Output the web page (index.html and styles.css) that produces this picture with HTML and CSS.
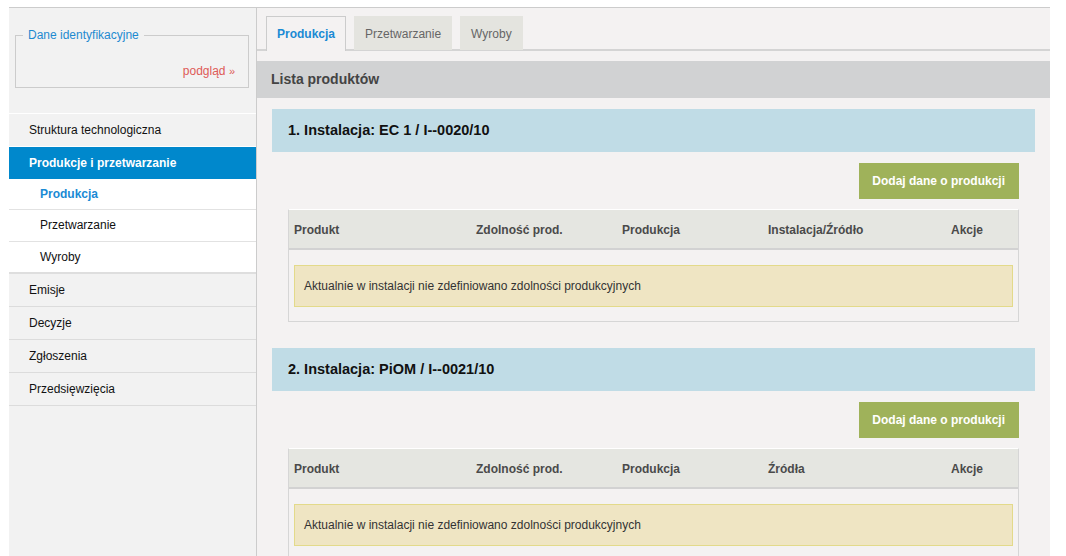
FILE: index.html
```html
<!DOCTYPE html>
<html lang="pl">
<head>
    <meta charset="UTF-8">
    <title>Lista produktów</title>
    <link rel="stylesheet" href="styles.css">
</head>
<body>
    <div class="page">
        <aside class="sidebar">
            <fieldset class="ident">
                <legend>Dane identyfikacyjne</legend>
                <a class="preview" href="#">podgląd <span class="raquo">»</span></a>
            </fieldset>
            <ul class="nav">
                <li class="nav-item">Struktura technologiczna</li>
                <li class="nav-item active">Produkcje i przetwarzanie</li>
                <li class="sub-item current">Produkcja</li>
                <li class="sub-item">Przetwarzanie</li>
                <li class="sub-item last">Wyroby</li>
                <li class="nav-item">Emisje</li>
                <li class="nav-item">Decyzje</li>
                <li class="nav-item">Zgłoszenia</li>
                <li class="nav-item">Przedsięwzięcia</li>
            </ul>
        </aside>

        <main class="content">
            <div class="tabs">
                <span class="tab active">Produkcja</span>
                <span class="tab">Przetwarzanie</span>
                <span class="tab">Wyroby</span>
            </div>

            <h2 class="list-title">Lista produktów</h2>

            <section class="installation">
                <h3 class="inst-title">1. Instalacja: EC 1 / I--0020/10</h3>
                <div class="actions">
                    <button class="btn-add">Dodaj dane o produkcji</button>
                </div>
                <div class="table">
                    <div class="table-head">
                        <span>Produkt</span>
                        <span>Zdolność prod.</span>
                        <span>Produkcja</span>
                        <span>Instalacja/Źródło</span>
                        <span>Akcje</span>
                    </div>
                    <div class="table-body">
                        <div class="notice">Aktualnie w instalacji nie zdefiniowano zdolności produkcyjnych</div>
                    </div>
                </div>
            </section>

            <section class="installation">
                <h3 class="inst-title">2. Instalacja: PiOM / I--0021/10</h3>
                <div class="actions">
                    <button class="btn-add">Dodaj dane o produkcji</button>
                </div>
                <div class="table">
                    <div class="table-head">
                        <span>Produkt</span>
                        <span>Zdolność prod.</span>
                        <span>Produkcja</span>
                        <span>Źródła</span>
                        <span>Akcje</span>
                    </div>
                    <div class="table-body">
                        <div class="notice">Aktualnie w instalacji nie zdefiniowano zdolności produkcyjnych</div>
                    </div>
                </div>
            </section>
        </main>
    </div>
</body>
</html>
```

FILE: styles.css
```css
body {
    margin: 0;
    background: #fff;
    font-family: 'Liberation Sans', Arial, sans-serif;
    font-size: 12px;
    color: #222;
}
.page {
    display: flex;
    margin: 7px 16px 0 9px;
    border-top: 1px solid #ccc;
    height: 548px;
    overflow: hidden;
}
.sidebar {
    width: 247px;
    flex-shrink: 0;
    background: #f2f2f2;
}
.ident {
    margin: 20px 7px 0 6px;
    padding: 0 13px 0 12px;
    height: 58px;
    border: 1px solid #ccc;
    display: flex;
    flex-direction: column;
    justify-content: flex-end;
}
.ident legend {
    color: #1e8ad0;
    padding: 0 5px;
    margin-left: -5px;
}
.preview {
    align-self: flex-end;
    color: #de5a57;
    text-decoration: none;
    margin-bottom: 9px;
}
.raquo {
    font-size: 11px;
}
.nav {
    list-style: none;
    margin: 25px 0 0;
    padding: 0;
    border-top: 1px solid #fff;
}
.nav-item {
    height: 32px;
    line-height: 32px;
    padding-left: 20px;
    border-bottom: 1px solid #dcdcdc;
    color: #111;
}
.nav-item:first-child {
    border-bottom-color: #fff;
}
.nav-item.active {
    background: #0088cc;
    color: #fff;
    font-weight: bold;
    border-bottom: none;
}
.sub-item {
    background: #fff;
    height: 31px;
    line-height: 31px;
    padding-left: 31px;
    border-bottom: 1px solid #e2e2e2;
    color: #111;
}
.sub-item.current {
    color: #1a8ad4;
    font-weight: bold;
    height: 30px;
    line-height: 30px;
}
.sub-item.last {
    height: 30px;
    line-height: 30px;
    border-bottom: 2px solid #dedede;
}
.content {
    width: 793px;
    flex-shrink: 0;
    background: #f4f2f2;
    border-left: 1px solid #ccc;
}
.tabs {
    display: flex;
    gap: 8px;
    padding: 8px 0 0 9px;
    border-bottom: 2px solid #d4d4d4;
}
.tab {
    height: 33px;
    line-height: 34px;
    padding: 0 10px;
    background: #e4e4df;
    color: #666;
    margin-bottom: -1px;
    border: 1px solid #e4e4df;
    border-bottom: none;
}
.tab.active {
    background: #f4f2f2;
    border-color: #ccc;
    color: #1a8ad4;
    font-weight: bold;
    height: 34px;
    margin-bottom: -2px;
}
.list-title {
    margin: 10px 0 0;
    height: 37px;
    line-height: 37px;
    padding-left: 14px;
    background: #d1d2d3;
    color: #444;
    font-size: 14px;
}
.installation {
    margin: 11px 15px 26px;
}
.inst-title {
    margin: 0;
    height: 43px;
    line-height: 43px;
    padding-left: 16px;
    background: #c0dce6;
    color: #111;
    font-size: 14.5px;
}
.actions {
    display: flex;
    justify-content: flex-end;
    padding: 11px 16px 10px 0;
}
.btn-add {
    height: 36px;
    padding: 0 14px 0 13px;
    border: none;
    background: #9fb25a;
    color: #fff;
    font-family: inherit;
    font-size: 12px;
    font-weight: bold;
}
.table {
    margin: 0 16px;
    border: 1px solid #d6d6d6;
    border-top: 1px solid #fff;
}
.table-head {
    display: grid;
    grid-template-columns: 182px 146px 146px 183px 1fr;
    height: 38px;
    line-height: 41px;
    padding-left: 5px;
    background: #e5e6e1;
    border-bottom: 2px solid #d2d2d2;
    color: #4a4a4a;
    font-weight: bold;
}
.table-body {
    padding: 15px 5px 14px 5px;
}
.notice {
    height: 40px;
    line-height: 40px;
    padding-left: 9px;
    background: #efe5c3;
    border: 1px solid #e3da8a;
    color: #333;
}
```
